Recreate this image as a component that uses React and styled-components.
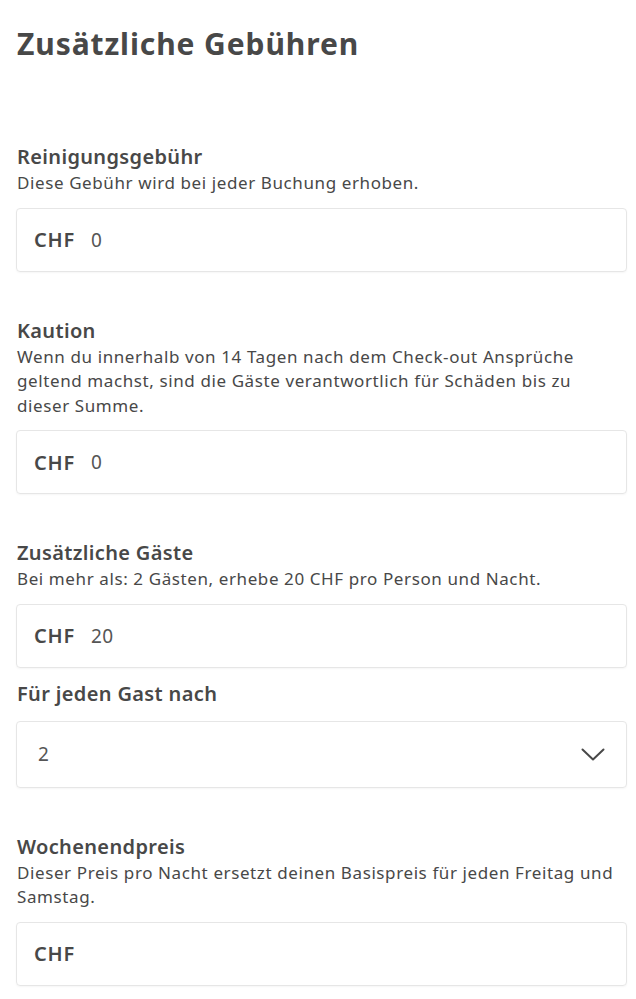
import React from "react";
import styled, { createGlobalStyle } from "styled-components";

const GlobalStyle = createGlobalStyle`
  * {
    box-sizing: border-box;
  }

  body {
    margin: 0;
    background: #ffffff;
    color: #484848;
    font-family: "Noto Sans", "Open Sans", sans-serif;
  }
`;

const Page = styled.div`
  padding: 26px 9px 16px 16px;
`;

const Title = styled.h1`
  margin: 0 0 82px 1px;
  font-size: 30px;
  line-height: 36px;
  font-weight: 700;
  letter-spacing: 0.9px;
`;

const Section = styled.section`
  display: flex;
  flex-direction: column;
  margin-bottom: ${(p) => (p.$tight ? "13px" : "46px")};
`;

const Label = styled.h2`
  margin: 0 0 0 1px;
  font-size: 20px;
  line-height: 26px;
  font-weight: 600;
  letter-spacing: 0.35px;
`;

const Hint = styled.p`
  margin: 1px 0 0 1px;
  font-size: 17px;
  line-height: 24.5px;
  font-weight: 400;
  letter-spacing: 0.6px;
`;

const Field = styled.div`
  display: flex;
  align-items: center;
  height: ${(p) => (p.$select ? "67px" : "64px")};
  margin-top: ${(p) => (p.$select ? "14px" : "12px")};
  padding: ${(p) => (p.$select ? "0 21px 0 21px" : "0 21px 0 17px")};
  border: 1px solid #e6e6e6;
  border-radius: 4px;
  box-shadow: 0 1px 2px rgba(0, 0, 0, 0.04);
`;

const Currency = styled.span`
  font-size: 20px;
  font-weight: 600;
  letter-spacing: 0.8px;
  margin-right: 16px;
`;

const Value = styled.span`
  flex: 1;
  font-size: 19px;
  font-weight: 400;
  letter-spacing: 0.4px;
  color: #555555;
`;

const Chevron = () => (
  <svg width="24" height="13" viewBox="0 0 24 13" fill="none">
    <path
      d="M1.5 1.5 L12 11.5 L22.5 1.5"
      stroke="#484848"
      strokeWidth="2"
      strokeLinecap="round"
      strokeLinejoin="round"
    />
  </svg>
);

function PriceField({ value }) {
  return (
    <Field>
      <Currency>CHF</Currency>
      <Value>{value}</Value>
    </Field>
  );
}

export default function App() {
  return (
    <Page>
      <GlobalStyle />
      <Title>Zusätzliche Gebühren</Title>

      <Section>
        <Label>Reinigungsgebühr</Label>
        <Hint>Diese Gebühr wird bei jeder Buchung erhoben.</Hint>
        <PriceField value="0" />
      </Section>

      <Section>
        <Label>Kaution</Label>
        <Hint>
          Wenn du innerhalb von 14 Tagen nach dem Check-out Ansprüche geltend
          machst, sind die Gäste verantwortlich für Schäden bis zu dieser
          Summe.
        </Hint>
        <PriceField value="0" />
      </Section>

      <Section $tight>
        <Label>Zusätzliche Gäste</Label>
        <Hint>Bei mehr als: 2 Gästen, erhebe 20 CHF pro Person und Nacht.</Hint>
        <PriceField value="20" />
      </Section>

      <Section>
        <Label>Für jeden Gast nach</Label>
        <Field $select>
          <Value>2</Value>
          <Chevron />
        </Field>
      </Section>

      <Section>
        <Label>Wochenendpreis</Label>
        <Hint>
          Dieser Preis pro Nacht ersetzt deinen Basispreis für jeden Freitag
          und Samstag.
        </Hint>
        <PriceField value="" />
      </Section>
    </Page>
  );
}
